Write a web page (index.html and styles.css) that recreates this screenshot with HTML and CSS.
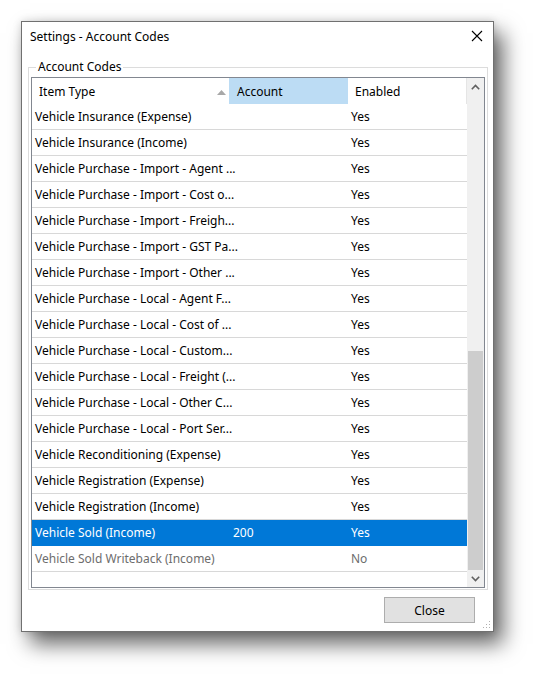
FILE: index.html
```html
<!DOCTYPE html>
<html lang="en">
<head>
    <meta charset="UTF-8">
    <title>Settings - Account Codes</title>
    <link rel="stylesheet" href="styles.css">
</head>
<body>
    <div class="window">
        <div class="titlebar">
            <span class="title">Settings - Account Codes</span>
            <svg class="close-x" width="12" height="12" viewBox="0 0 12 12">
                <path d="M1 1 L11 11 M11 1 L1 11" stroke="#000" stroke-width="1.1"/>
            </svg>
        </div>

        <fieldset class="group">
            <legend>Account Codes</legend>
            <div class="list">
                <div class="list-body">
                    <div class="header">
                        <div class="col col-type">Item Type
                            <svg class="sort" width="9" height="5" viewBox="0 0 9 5"><path d="M0 5 L4.5 0 L9 5 Z" fill="#a8a8a8"/></svg>
                        </div>
                        <div class="col col-account sorted">Account</div>
                        <div class="col col-enabled">Enabled</div>
                    </div>
                    <div class="row"><div class="col col-type">Vehicle Insurance (Expense)</div><div class="col col-account"></div><div class="col col-enabled">Yes</div></div>
                    <div class="row"><div class="col col-type">Vehicle Insurance (Income)</div><div class="col col-account"></div><div class="col col-enabled">Yes</div></div>
                    <div class="row"><div class="col col-type">Vehicle Purchase - Import - Agent ...</div><div class="col col-account"></div><div class="col col-enabled">Yes</div></div>
                    <div class="row"><div class="col col-type">Vehicle Purchase - Import - Cost o...</div><div class="col col-account"></div><div class="col col-enabled">Yes</div></div>
                    <div class="row"><div class="col col-type">Vehicle Purchase - Import - Freigh...</div><div class="col col-account"></div><div class="col col-enabled">Yes</div></div>
                    <div class="row"><div class="col col-type">Vehicle Purchase - Import - GST Pa...</div><div class="col col-account"></div><div class="col col-enabled">Yes</div></div>
                    <div class="row"><div class="col col-type">Vehicle Purchase - Import - Other ...</div><div class="col col-account"></div><div class="col col-enabled">Yes</div></div>
                    <div class="row"><div class="col col-type">Vehicle Purchase - Local - Agent F...</div><div class="col col-account"></div><div class="col col-enabled">Yes</div></div>
                    <div class="row"><div class="col col-type">Vehicle Purchase - Local - Cost of ...</div><div class="col col-account"></div><div class="col col-enabled">Yes</div></div>
                    <div class="row"><div class="col col-type">Vehicle Purchase - Local - Custom...</div><div class="col col-account"></div><div class="col col-enabled">Yes</div></div>
                    <div class="row"><div class="col col-type">Vehicle Purchase - Local - Freight (...</div><div class="col col-account"></div><div class="col col-enabled">Yes</div></div>
                    <div class="row"><div class="col col-type">Vehicle Purchase - Local - Other C...</div><div class="col col-account"></div><div class="col col-enabled">Yes</div></div>
                    <div class="row"><div class="col col-type">Vehicle Purchase - Local - Port Ser...</div><div class="col col-account"></div><div class="col col-enabled">Yes</div></div>
                    <div class="row"><div class="col col-type">Vehicle Reconditioning (Expense)</div><div class="col col-account"></div><div class="col col-enabled">Yes</div></div>
                    <div class="row"><div class="col col-type">Vehicle Registration (Expense)</div><div class="col col-account"></div><div class="col col-enabled">Yes</div></div>
                    <div class="row"><div class="col col-type">Vehicle Registration (Income)</div><div class="col col-account"></div><div class="col col-enabled">Yes</div></div>
                    <div class="row selected"><div class="col col-type">Vehicle Sold (Income)</div><div class="col col-account">200</div><div class="col col-enabled">Yes</div></div>
                    <div class="row disabled"><div class="col col-type">Vehicle Sold Writeback (Income)</div><div class="col col-account"></div><div class="col col-enabled">No</div></div>
                </div>
                <div class="scrollbar">
                    <div class="arrow">
                        <svg width="9" height="6" viewBox="0 0 9 6"><path d="M0.8 5.2 L4.5 1.5 L8.2 5.2" stroke="#606060" stroke-width="1.6" fill="none"/></svg>
                    </div>
                    <div class="track">
                        <div class="thumb"></div>
                    </div>
                    <div class="arrow">
                        <svg width="9" height="6" viewBox="0 0 9 6"><path d="M0.8 0.8 L4.5 4.5 L8.2 0.8" stroke="#606060" stroke-width="1.6" fill="none"/></svg>
                    </div>
                </div>
            </div>
        </fieldset>

        <div class="footer">
            <button class="btn">Close</button>
        </div>
        <svg class="grip" width="8" height="8" viewBox="0 0 8 8">
            <rect x="6" y="0" width="1" height="1" fill="#b0b0b0"/>
            <rect x="6" y="3" width="1" height="1" fill="#b0b0b0"/>
            <rect x="3" y="3" width="1" height="1" fill="#b0b0b0"/>
            <rect x="6" y="6" width="1" height="1" fill="#b0b0b0"/>
            <rect x="3" y="6" width="1" height="1" fill="#b0b0b0"/>
            <rect x="0" y="6" width="1" height="1" fill="#b0b0b0"/>
        </svg>
    </div>
</body>
</html>
```

FILE: styles.css
```css
body {
    margin: 0;
    padding: 21px 0 0 21px;
    min-height: 674px;
    box-sizing: border-box;
    background-color: #ffffff;
    font-family: "Noto Sans", "Open Sans", sans-serif;
    font-size: 12px;
    color: #000;
}
.window {
    position: relative;
    box-sizing: border-box;
    width: 473px;
    height: 611px;
    border: 1px solid #707070;
    background-color: #fff;
    box-shadow: 9px 12px 20px rgba(0,0,0,0.6), 0 0 8px rgba(0,0,0,0.15);
}
.titlebar {
    display: flex;
    align-items: center;
    justify-content: space-between;
    height: 28px;
    padding: 0 10px 0 8px;
}
.title {
    font-size: 12px;
}
.close-x {
    display: block;
}
.group {
    margin: 10px 5px 0 6px;
    padding: 0 0 1px 2px;
    border: 1px solid #dcdcdc;
    min-width: 0;
}
.group legend {
    padding: 0 2px;
    margin-left: 5px;
    line-height: 14px;
}
.list {
    display: flex;
    height: 509px;
    margin-top: 3px;
    margin-right: 2px;
    border: 1px solid #828790;
    overflow: hidden;
}
.list-body {
    flex: 1;
    overflow: hidden;
}
.header, .row {
    display: flex;
    height: 26px;
}
.header .col {
    line-height: 27px;
}
.row {
    box-sizing: border-box;
    border-bottom: 1px solid #d8d8d8;
    line-height: 26px;
}
.col {
    white-space: nowrap;
}
.col-type {
    width: 197px;
    padding-left: 3px;
    box-sizing: border-box;
    position: relative;
}
.header .col-type {
    padding-left: 7px;
}
.col-account {
    width: 119px;
    padding-left: 4px;
    box-sizing: border-box;
}
.header .col-account {
    padding-left: 8px;
}
.col-enabled {
    flex: 1;
    padding-left: 3px;
    box-sizing: border-box;
}
.header .col-enabled {
    padding-left: 7px;
    border-right: 1px solid #e5e5e5;
}
.sorted {
    background-color: #bcdcf4;
}
.sort {
    position: absolute;
    right: 3px;
    top: 12px;
}
.row.selected {
    background-color: #0078d7;
    color: #fff;
    border-bottom-color: #0078d7;
}
.row.disabled {
    color: #6d6d6d;
}
.scrollbar {
    display: flex;
    flex-direction: column;
    width: 17px;
    background-color: #f0f0f0;
}
.arrow {
    display: flex;
    align-items: center;
    justify-content: center;
    height: 17px;
}
.track {
    flex: 1;
    display: flex;
    flex-direction: column;
    justify-content: flex-end;
}
.thumb {
    height: 219px;
    margin: 0 1px 0 1px;
    background-color: #cdcdcd;
}
.footer {
    display: flex;
    justify-content: flex-end;
    padding: 7px 18px 0 0;
}
.btn {
    width: 91px;
    height: 26px;
    border: 1px solid #adadad;
    background-color: #e1e1e1;
    font-family: "Noto Sans", "Open Sans", sans-serif;
    font-size: 12px;
    color: #000;
    padding: 0;
}
.grip {
    position: absolute;
    right: 2px;
    bottom: 2px;
}
```
